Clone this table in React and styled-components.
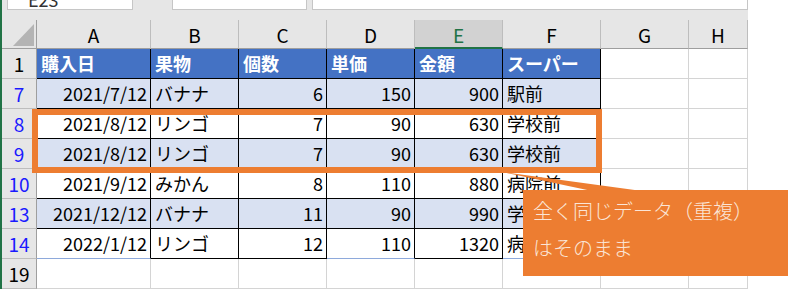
import React from 'react'
import styled, { createGlobalStyle } from 'styled-components'

const GlobalStyle = createGlobalStyle`
  html, body {
    margin: 0;
    padding: 0;
    background: #ffffff;
  }
  body {
    font-family: "Noto Sans CJK JP", "Noto Sans", sans-serif;
  }
`

// sheet geometry
const COLS = ['A', 'B', 'C', 'D', 'E', 'F', 'G', 'H']
const WIDTHS = [114, 88, 88, 88, 88, 98, 88, 59]
const ACCENT = '#ED7D31'

const ROWS = [
  { n: '1', head: true, cells: ['購入日', '果物', '個数', '単価', '金額', 'スーパー'] },
  { n: '7', band: true, filtered: true, cells: ['2021/7/12', 'バナナ', '6', '150', '900', '駅前'] },
  { n: '8', filtered: true, cells: ['2021/8/12', 'リンゴ', '7', '90', '630', '学校前'] },
  { n: '9', band: true, filtered: true, cells: ['2021/8/12', 'リンゴ', '7', '90', '630', '学校前'] },
  { n: '10', filtered: true, cells: ['2021/9/12', 'みかん', '8', '110', '880', '病院前'] },
  { n: '13', band: true, filtered: true, cells: ['2021/12/12', 'バナナ', '11', '90', '990', '学校前'] },
  { n: '14', filtered: true, last: true, cells: ['2022/1/12', 'リンゴ', '12', '110', '1320', '病院前'] },
  { n: '19', empty: true, cells: [] },
]

const NUMERIC = [true, false, true, true, true, false]

const Page = styled.div`
  position: relative;
  display: flex;
  width: 788px;
  height: 289px;
  overflow: hidden;
  background: #ffffff;
`

const GreenEdge = styled.div`
  width: 2px;
  background: #217346;
`

const Sheet = styled.div`
  width: 746px;
  display: flex;
  flex-direction: column;
`

const FormulaArea = styled.div`
  height: 23px;
  background: #e6e6e6;
  display: flex;
  align-items: flex-start;
  padding-left: 5px;
`

const FieldBox = styled.div`
  width: ${p => p.$w}px;
  margin-left: ${p => p.$gap || 0}px;
  height: 10px;
  box-sizing: border-box;
  background: #ffffff;
  border: 1px solid #c6c6c6;
  border-top: none;
  display: flex;
  align-items: flex-end;
  overflow: hidden;
  padding-left: 20px;
  font-size: 18px;
  color: #333;
`

const Clipped = styled.span`
  line-height: 20px;
  flex-shrink: 0;
`

const Grid = styled.div`
  display: grid;
  grid-template-columns: 35px ${WIDTHS.map(w => w + 'px').join(' ')};
  grid-template-rows: 29px repeat(8, 30px);
`

const Corner = styled.div`
  background: #e6e6e6;
  border-right: 1px solid #9e9e9e;
  border-bottom: 1px solid #9e9e9e;
  display: flex;
  align-items: flex-end;
  justify-content: flex-end;
  padding: 0 2px 2px 0;
`

const ColHead = styled.div`
  box-sizing: border-box;
  background: ${p => (p.$sel ? '#d2d2d2' : '#e6e6e6')};
  color: ${p => (p.$sel ? '#217346' : '#000')};
  border-right: 1px solid #bdbdbd;
  border-bottom: ${p => (p.$sel ? '2px solid #217346' : '1px solid #9e9e9e')};
  display: flex;
  align-items: center;
  justify-content: center;
  font-size: 19px;
  padding-top: ${p => (p.$sel ? 1 : 0)}px;
`

const RowHead = styled.div`
  box-sizing: border-box;
  background: #e6e6e6;
  color: ${p => (p.$filtered ? '#1a1aff' : '#000')};
  border-right: 1px solid #9e9e9e;
  border-bottom: 1px solid #bdbdbd;
  display: flex;
  align-items: center;
  justify-content: center;
  font-size: 19px;
`

const Cell = styled.div`
  box-sizing: border-box;
  background: ${p => (p.$head ? '#4472c4' : p.$band ? '#d9e1f2' : '#ffffff')};
  color: ${p => (p.$head ? '#ffffff' : '#000')};
  font-weight: ${p => (p.$head ? 700 : 400)};
  border-right: 1px solid ${p => p.$rc};
  border-bottom: 1px solid ${p => p.$bc};
  display: flex;
  align-items: center;
  justify-content: ${p => (p.$num ? 'flex-end' : 'flex-start')};
  padding: 0 3px 2px 4px;
  font-size: 18px;
  white-space: nowrap;
  overflow: hidden;
`

const Highlight = styled.div`
  position: absolute;
  left: 32px;
  top: 109px;
  width: 570px;
  height: 64px;
  box-sizing: border-box;
  border: 6px solid ${ACCENT};
`

const Pointer = styled.svg`
  position: absolute;
  left: 0;
  top: 0;
  pointer-events: none;
`

const Callout = styled.div`
  position: absolute;
  left: 523px;
  top: 190px;
  width: 280px;
  height: 86px;
  box-sizing: border-box;
  background: ${ACCENT};
  color: #fbe5d6;
  font-size: 20px;
  font-weight: 300;
  line-height: 37px;
  padding: 2px 0 0 10px;
`

const CornerMark = () => (
  <svg width="21" height="22" viewBox="0 0 21 22">
    <polygon points="0,22 21,22 21,0" fill="#b4b4b4" />
  </svg>
)

function cellBorders(row, col) {
  const inTable = col < 6 && !row.empty
  const rc = inTable ? '#000' : '#d4d4d4'
  let bc = '#d4d4d4'
  if (inTable) bc = row.last ? (col === 1 || col === 2 || col === 4 ? '#000' : '#8ea9db') : '#000'
  return { rc, bc }
}

const App = () => (
  <>
    <GlobalStyle />
    <Page>
      <GreenEdge />
      <Sheet>
        <FormulaArea>
          <FieldBox $w={126}>
            <Clipped>E23</Clipped>
          </FieldBox>
          <FieldBox $w={135} $gap={39}>
            <Clipped> </Clipped>
          </FieldBox>
          <FieldBox $w={436} $gap={5} />
        </FormulaArea>

        <Grid>
          <Corner>
            <CornerMark />
          </Corner>
          {COLS.map(c => (
            <ColHead key={c} $sel={c === 'E'}>{c}</ColHead>
          ))}

          {ROWS.map(row => (
            <React.Fragment key={row.n}>
              <RowHead $filtered={row.filtered}>{row.n}</RowHead>
              {COLS.map((c, i) => {
                const { rc, bc } = cellBorders(row, i)
                const text = row.cells[i] || ''
                return (
                  <Cell
                    key={c}
                    $head={row.head && i < 6}
                    $band={row.band && i < 6}
                    $num={!row.head && NUMERIC[i]}
                    $rc={rc}
                    $bc={bc}
                  >
                    {text}
                  </Cell>
                )
              })}
            </React.Fragment>
          ))}
        </Grid>
      </Sheet>

      <Highlight />
      <Pointer width="788" height="289" viewBox="0 0 788 289">
        <polygon points="502,172 592,191 642,191" fill={ACCENT} />
      </Pointer>
      <Callout>
        全く同じデータ（重複）
        <br />
        はそのまま
      </Callout>
    </Page>
  </>
)

export default App
